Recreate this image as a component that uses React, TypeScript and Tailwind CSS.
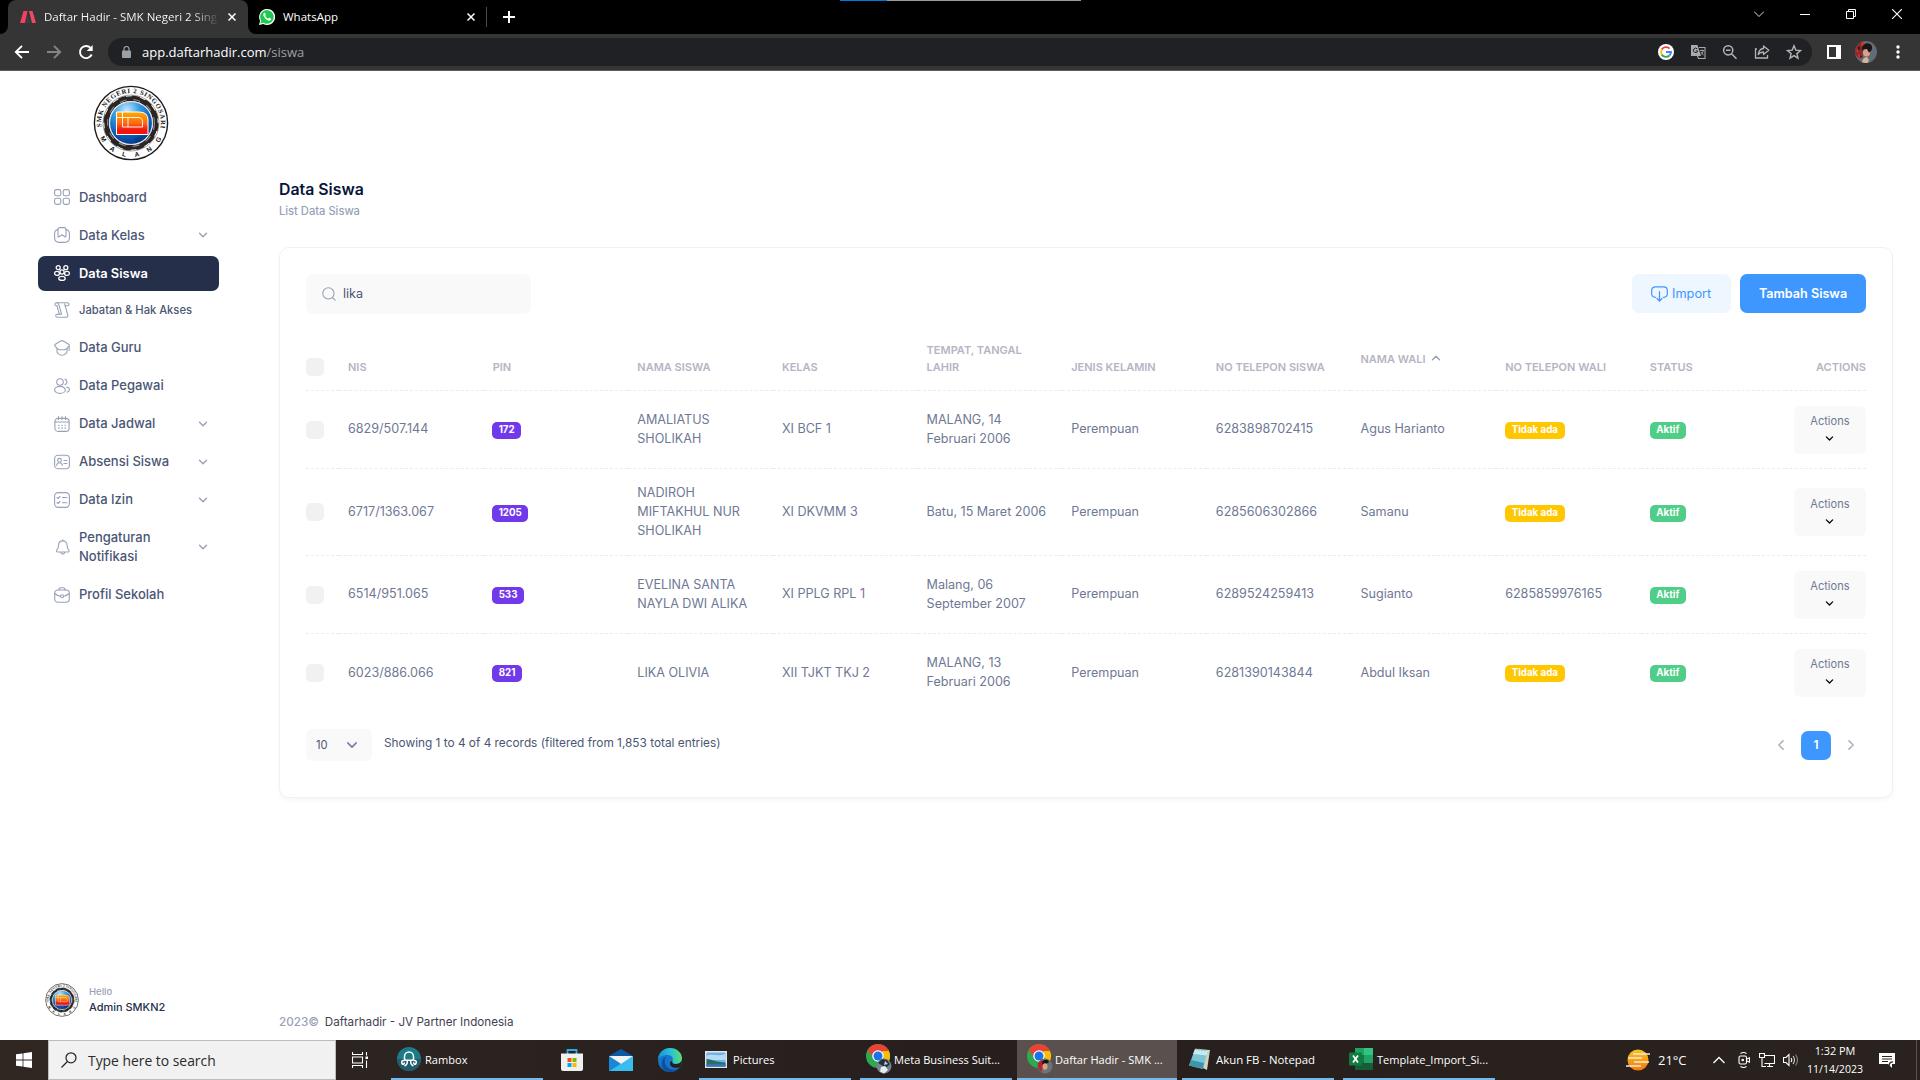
import React from "react";

type IconProps = { className?: string };

const line = {
  fill: "none",
  stroke: "currentColor",
  strokeWidth: 1.1,
  strokeLinecap: "round" as const,
  strokeLinejoin: "round" as const,
};

function SchoolLogo({ className, id }: { className?: string; id: string }) {
  return (
    <svg viewBox="-38 -38 76 76" className={className}>
      <defs>
        <radialGradient id={id + "g"} cx="0.4" cy="0.2" r="0.85">
          <stop offset="0" stopColor="#c9e8fc" />
          <stop offset="0.35" stopColor="#379fe2" />
          <stop offset="0.7" stopColor="#0a5cb8" />
          <stop offset="1" stopColor="#06337e" />
        </radialGradient>
        <linearGradient id={id + "r"} x1="0" y1="0" x2="0" y2="1">
          <stop offset="0" stopColor="#ffab00" />
          <stop offset="0.5" stopColor="#fb6a14" />
          <stop offset="0.8" stopColor="#f3140e" />
        </linearGradient>
        <path id={id + "t"} d="M-29.500 4A29.800 29.800 0 1 1 29.500 4" />
        <path id={id + "b"} d="M-31.800 13A34.400 34.400 0 0 0 31.800 13" />
      </defs>
      <circle r="36.6" fill="#fff" stroke="#1b1b1b" strokeWidth="1.4" />
      <circle r="28" fill="#fff" stroke="#8a8a8a" strokeWidth="0.8" />
      <circle r="24.4" fill="none" stroke="#2a2422" strokeWidth="4.600" />
      <circle r="26.6" fill="none" stroke="#2a2422" strokeWidth="2" strokeDasharray="8 5.93" />
      <circle r="23.400" fill="none" stroke="#8d8682" strokeWidth="1.200" strokeDasharray="7 7" />
      <circle r="21.4" fill={`url(#${id}g)`} stroke="#dfe6ec" strokeWidth="1" />
      <path d="M3 15l8-2 4 1-6 5-5-1z" fill="#063b86" opacity="0.8" />
      <path d="M-14.500-11H8Q17-11 17-3V11.500H-14.500Z" fill={`url(#${id}r)`} stroke="#fff" strokeWidth="1" />
      <path d="M-14.500-5.500H7Q11.500-5.500 11.500-1.500V4H-8.500V-11M-3-5.500V4" fill="none" stroke="#fff" strokeWidth="0.900" />
      <text fontFamily="Liberation Serif" fontWeight="700" fontSize="6.800" fill="#161616">
        <textPath href={`#${id}t`} textLength="103" lengthAdjust="spacing">SMK NEGERI 2 SINGOSARI</textPath>
      </text>
      <text fontFamily="Liberation Sans" fontWeight="700" fontSize="6.600" fill="#161616">
        <textPath href={`#${id}b`} startOffset="2" textLength="76" lengthAdjust="spacing">MALANG</textPath>
      </text>
    </svg>
  );
}

/* ---------- sidebar icons ---------- */
const GridIcon = () => (
  <svg viewBox="0 0 16 16" className="size-4" {...line}>
    <rect x="0.6" y="0.6" width="6.2" height="6.2" rx="1.8" />
    <rect x="9.2" y="0.6" width="6.2" height="6.2" rx="1.8" />
    <rect x="0.6" y="9.200" width="6.2" height="6.2" rx="1.8" />
    <rect x="9.2" y="9.200" width="6.2" height="6.2" rx="1.8" />
  </svg>
);
const ClassIcon = () => (
  <svg viewBox="0 0 16 16" className="size-4" {...line}>
    <path d="M4 2.500C1.800 3 .6 4.300.6 6.500v4.300c0 3 1.700 4.600 4.700 4.600h5.400c3 0 4.700-1.600 4.700-4.600V6.500C15.400 4.300 14.200 3 12 2.500" />
    <path d="M4 9.200V2.400C4 1.300 4.700.6 5.800.6h4.400c1.100 0 1.800.7 1.800 1.800v6.800c0 .6-.6.9-1.100.5L8 7.800l-2.900 1.900c-.5.4-1.100.1-1.100-.5z" />
  </svg>
);
const StudentsIcon = () => (
  <svg viewBox="0 0 16 16" className="size-4" {...line} strokeWidth={1.3}>
    <circle cx="4.200" cy="2.700" r="2" />
    <circle cx="11.800" cy="2.700" r="2" />
    <circle cx="8" cy="7" r="2.100" />
    <ellipse cx="3" cy="8.400" rx="2.400" ry="2" />
    <ellipse cx="13" cy="8.400" rx="2.400" ry="2" />
    <ellipse cx="8" cy="13.400" rx="3.200" ry="2" />
  </svg>
);
const ScrollIcon = () => (
  <svg viewBox="0 0 16 16" className="size-4" {...line}>
    <path d="M3 .7h10.200c1.200 0 1.900.6 1.900 1.600s-.7 1.500-1.600 1.500h-2.300l2.500 9c.4 1.500-.3 2.500-1.500 2.500H3.600c-1.200 0-1.900-.7-1.900-1.600 0-1 .7-1.500 1.600-1.500h2L3 3.800" />
    <path d="M3 3.800H2.400C1.300 3.800.8 3.200.8 2.300S1.600.7 2.700.7 4.500 1.400 4.900 2.800l2.700 9.400H3.500M11.200 3.800l-.5-2" />
  </svg>
);
const GraduateIcon = () => (
  <svg viewBox="0 0 16 16" className="size-4" {...line}>
    <path d="M6.600 1 1.400 4.200C.6 4.700.5 5.500 1 6.200l2.300 2.500c.8.900 1.500 1.100 2.700 1.100h4c1.200 0 1.900-.2 2.700-1.100L15 6.200c.5-.7.400-1.500-.4-2L9.400 1C8.400.4 7.600.4 6.600 1z" />
    <path d="M3 8.800v2.600c0 .9.200 1.300.9 1.900C5.100 14.500 6.300 15.300 8 15.300s2.900-.8 4.100-2c.7-.6.9-1 .9-1.900V8.800M15.100 6.500v4" />
  </svg>
);
const StaffIcon = () => (
  <svg viewBox="0 0 16 16" className="size-4" {...line}>
    <circle cx="6" cy="4" r="3.300" />
    <ellipse cx="6" cy="11.900" rx="5.400" ry="3.500" />
    <path d="M11 1.400a2.700 2.700 0 0 1 0 5.200M12.600 9c1.700.3 2.800 1.300 2.800 2.600s-.9 2.200-2.400 2.600" />
  </svg>
);
const CalendarIcon = () => (
  <svg viewBox="0 0 16 16" className="size-4" {...line}>
    <rect x="0.900" y="2.400" width="14.200" height="13" rx="3.200" />
    <path d="M1 6h14M4.500.6v3M8 .6v3M11.500.6v3" />
    <path d="M4.800 9.300h.3M7.900 9.300h.3M11 9.300h.3M4.800 12h.3M7.900 12h.3M11 12h.3" strokeWidth="1.3" />
  </svg>
);
const IdIcon = () => (
  <svg viewBox="0 0 16 16" className="size-4" {...line}>
    <rect x="0.600" y="1.300" width="14.800" height="13.400" rx="3.400" />
    <circle cx="5.500" cy="6.300" r="1.900" />
    <path d="M2.600 11.300c.3-1.700 1.400-2.600 2.900-2.600s2.600.9 2.900 2.600M10 6.500h3M10 9.500h3" />
  </svg>
);
const ListIcon = () => (
  <svg viewBox="0 0 16 16" className="size-4" {...line}>
    <rect x="0.600" y="0.600" width="14.800" height="14.800" rx="3.600" />
    <path d="M3 5.500l1.100 1 1.900-2M3 10.500l1.100 1 1.900-2M8.300 5.500h4.700M8.300 10.700h4.700" />
  </svg>
);
const BellIcon = () => (
  <svg viewBox="0 0 16 16" className="size-4" {...line}>
    <path d="M8.800.6v1.200M8.800 1.900c-2.600 0-4.200 1.700-4.200 4.200 0 2.400-.6 3.600-1.800 5-.7.900-.3 1.900.8 1.900h10.400c1.100 0 1.500-1 .8-1.900-1.200-1.400-1.800-2.600-1.800-5 0-2.500-1.600-4.200-4.200-4.200zM6.900 13.400c.2 1.100.9 1.700 1.900 1.700s1.700-.6 1.900-1.700" />
  </svg>
);
const BriefcaseIcon = () => (
  <svg viewBox="0 0 16 16" className="size-4" {...line}>
    <rect x="0.700" y="3" width="14.600" height="12.300" rx="3.200" />
    <path d="M5 3C5 1.400 5.800.7 7 .7h2c1.200 0 2 .7 2 2.300M.9 6.500c1.700 1.800 3.500 2.500 5.600 2.700M15.100 6.500c-1.700 1.800-3.500 2.500-5.600 2.700" />
    <circle cx="8" cy="9.200" r="1.500" />
  </svg>
);

function Chevron({ className, dir = "down" }: IconProps & { dir?: "down" | "up" | "left" | "right" }) {
  const d = {
    down: "M1.500 3.200 5 6.700 8.500 3.200",
    up: "M1.500 6.800 5 3.300 8.500 6.800",
    left: "M6.700 1.500 3.200 5 6.700 8.500",
    right: "M3.300 1.500 6.800 5 3.300 8.500",
  }[dir];
  return (
    <svg viewBox="0 0 10 10" className={className} {...line} strokeWidth={1.4}>
      <path d={d} />
    </svg>
  );
}

/* ---------- browser ---------- */
const Close = () => (
  <svg viewBox="0 0 8 8" className="size-2 shrink-0" fill="none" stroke="#fff" strokeWidth="1.5">
    <path d="M.5.5l7 7M7.500.5l-7 7" />
  </svg>
);

function TabStrip() {
  return (
    <div className="relative flex h-[34px] bg-black font-['Open_Sans'] text-[11.5px] text-white">
      <div className="absolute top-0 left-[840px] h-px w-[241px] bg-[#9b9b9b]">
        <div className="h-px w-[47px] bg-[#0078d7]" />
      </div>
      <svg viewBox="0 0 8 8" className="size-2 self-end" fill="#353535">
        <path d="M8 0v8H0a8 8 0 0 0 8-8z" />
      </svg>
      <div className="flex w-[240px] items-center rounded-t-lg bg-[#353535] pr-3 pb-[1px] pl-3">
        <svg viewBox="0 0 16 12" className="h-3 w-4 shrink-0">
          <path d="M3.500 0h4L5 12H0z" fill="#f43f5e" />
          <path d="M9 0h3.500L16 12h-4z" fill="#ee4a62" />
          <path d="M7.800 4l1.600 8h-3z" fill="#33415c" />
        </svg>
        <div className="ml-2 flex-1">
          <span className="bg-gradient-to-r from-white from-85% to-white/10 bg-clip-text leading-[18px] whitespace-nowrap text-transparent">
            Daftar Hadir - SMK Negeri 2 Sing
          </span>
        </div>
        <Close />
      </div>
      <svg viewBox="0 0 8 8" className="size-2 self-end" fill="#353535">
        <path d="M0 0v8h8a8 8 0 0 1-8-8z" />
      </svg>
      <div className="flex w-[230px] items-center pb-[1px] pl-[3px]">
        <svg viewBox="0 0 16 16" className="size-4 shrink-0">
          <path d="M0 16l1.100-4.200A8 8 0 1 1 4.300 15z" fill="#fff" />
          <path d="M1.400 14.600l.8-3A6.800 6.800 0 1 1 4.500 13.800z" fill="#1fc94f" />
          <path d="M5.200 4c-.9.500-1.200 1.500-.7 2.700 1 2.400 2.500 3.800 4.900 4.800 1.300.5 2.400.1 2.700-.9.200-.7.100-.9-.4-1.200l-1.300-.6c-.6-.2-.7.900-1.300.9C8 9.300 6.600 8 6.200 6.800c0-.4.800-.7.600-1.200L6.200 4.200C6 3.800 5.600 3.800 5.200 4z" fill="#fff" />
        </svg>
        <div className="ml-2 flex-1 leading-[18px]">WhatsApp</div>
        <div className="mr-[11px]">
          <Close />
        </div>
      </div>
      <div className="mt-[7px] h-5 w-px bg-[#4b4b4b]" />
      <svg viewBox="0 0 12 12" className="mt-[11px] ml-4 size-3" fill="none" stroke="#fff" strokeWidth="2">
        <path d="M6 0v12M0 6h12" />
      </svg>
      <div className="mt-[9px] ml-auto flex h-[10px] items-center gap-[36px] pr-[18px]">
        <svg viewBox="0 0 10 10" className="size-[10px]" fill="none" stroke="#ddd" strokeWidth="1">
          <path d="M0 2.500l5 5 5-5" />
        </svg>
        <svg viewBox="0 0 10 10" className="size-[10px]" fill="none" stroke="#fff" strokeWidth="1">
          <path d="M0 5.500h10" />
        </svg>
        <svg viewBox="0 0 10 10" className="size-[10px]" fill="none" stroke="#fff" strokeWidth="1">
          <path d="M.5 2.500h7v7h-7zM2.500 2.500v-2h7v7h-2" />
        </svg>
        <svg viewBox="0 0 10 10" className="size-[10px]" fill="none" stroke="#fff" strokeWidth="1.100">
          <path d="M0 0l10 10M10 0L0 10" />
        </svg>
      </div>
    </div>
  );
}

function AvatarPhoto({ className }: IconProps) {
  return (
    <svg viewBox="0 0 22 22" className={className}>
      <clipPath id="avatar-round">
        <circle cx="11" cy="11" r="11" />
      </clipPath>
      <g clipPath="url(#avatar-round)">
        <rect width="22" height="22" fill="#626c76" />
        <path d="M0 6l6-6 3 1-2 7 1 6-3 4-5-4z" fill="#8f2a2c" />
        <path d="M7 0l2 1-1 4-2-1zM1 9l3-1-1 4zM3 13l4 2-2 4z" fill="#e0342f" />
        <path d="M3 5l3 2-3 3zM5 14l3 2-3 1z" fill="#2b2224" />
        <ellipse cx="11.500" cy="11" rx="3.600" ry="4.500" fill="#dca183" />
        <path d="M7 8c0-4 4-7 8-5 2 1 3 4 1 7-1 1-2 2-2.500 1L12 8 8.500 8.500 8 11z" fill="#191517" />
        <path d="M7 22c0-3 2-6 5-6l2 3-1 3z" fill="#d8b29b" />
      </g>
    </svg>
  );
}

function Toolbar() {
  return (
    <div className="flex h-[37px] items-center border-b border-[#5a5a5a] bg-[#353535] font-['Open_Sans'] text-[13px]">
      <div className="flex w-[108px] items-center gap-4 pl-[14px]">
        <svg viewBox="0 0 16 16" className="size-4" fill="none" stroke="#fff" strokeWidth="1.900">
          <path d="M15 8H2.500M8 1.800L1.800 8 8 14.200" />
        </svg>
        <svg viewBox="0 0 16 16" className="size-4" fill="none" stroke="#858585" strokeWidth="1.900">
          <path d="M1 8h12.500M8 1.800L14.200 8 8 14.200" />
        </svg>
        <svg viewBox="0 0 16 16" className="size-4" fill="none" stroke="#fff" strokeWidth="1.900">
          <path d="M13.700 10.500A6.100 6.100 0 1 1 12.600 3.900" />
          <path d="M14.700 1v6H8.700z" fill="#fff" stroke="none" />
        </svg>
      </div>
      <div className="flex h-7 w-[1704px] items-center rounded-full bg-[#202124] pr-[10px] pl-[14px]">
        <svg viewBox="0 0 9 12" className="-mt-px h-3 w-[9px]">
          <rect y="4.500" width="9" height="7.500" rx="1" fill="#9aa0a6" />
          <path d="M2 5V3a2.500 2.500 0 0 1 5 0v2" fill="none" stroke="#9aa0a6" strokeWidth="1.200" />
        </svg>
        <div className="ml-[11px] leading-[18px] text-white">
          app.daftarhadir.com<span className="text-[#9aa0a6]">/siswa</span>
        </div>
        <div className="ml-auto flex items-center gap-4">
          <svg viewBox="0 0 16 16" className="size-4">
            <circle cx="8" cy="8" r="8" fill="#fff" />
            <g fill="none" strokeWidth="1.900">
              <path d="M11.600 4.600A5 5 0 0 0 3.700 5.600" stroke="#ea4335" />
              <path d="M3.700 5.600a5 5 0 0 0 0 4.800" stroke="#fbbc05" />
              <path d="M3.700 10.400a5 5 0 0 0 7.800 1.100" stroke="#34a853" />
              <path d="M11.500 11.500A5 5 0 0 0 13 8H8" stroke="#4285f4" />
            </g>
          </svg>
          <svg viewBox="0 0 16 16" className="size-4">
            <path d="M1 1h6.500L11 12H1z" fill="#a9a9a9" />
            <path d="M9 3.500h6v11H8.500l-1-2.500" fill="none" stroke="#a9a9a9" strokeWidth="1.100" />
            <path d="M7.300 5a2.200 2.200 0 1 0 .4 2H5.800" fill="none" stroke="#202124" strokeWidth="1" />
            <path d="M10 6.500h4M12 5.500v1M13.300 6.600c-.4 2-1.400 3.300-2.300 4M11 8c.7 1.500 1.600 2.300 2.700 3" fill="none" stroke="#a9a9a9" strokeWidth="0.900" />
          </svg>
          <svg viewBox="0 0 16 16" className="size-4" fill="none" stroke="#b4b4b4" strokeWidth="1.500">
            <circle cx="6.200" cy="6.300" r="4.600" />
            <path d="M9.500 9.700l5 5M4 6.300h4.500" />
          </svg>
          <svg viewBox="0 0 16 16" className="size-4" fill="none" stroke="#b4b4b4" strokeWidth="1.300">
            <path d="M3 5H1.500v9h12v-3" />
            <path d="M9.500 2l5.300 4.300-5.300 4.200V8C7 8 5.500 8.800 4.200 10.500 4.600 7 6.300 4.800 9.500 4.500z" strokeLinejoin="round" />
          </svg>
          <svg viewBox="0 0 16 16" className="size-4" fill="none" stroke="#b4b4b4" strokeWidth="1.400">
            <path d="M8 1.800l1.800 4.300 4.700.4-3.600 3.100 1.100 4.600L8 11.700l-4 2.500 1.100-4.600L1.500 6.500l4.700-.4z" />
          </svg>
        </div>
      </div>
      <svg viewBox="0 0 14 14" className="ml-[15px] size-[14px]">
        <path d="M0 0h14v14H0z" fill="#fff" />
        <path d="M2 2h7v10H2z" fill="#353535" />
      </svg>
      <AvatarPhoto className="ml-[14px] size-[22px]" />
      <svg viewBox="0 0 4 16" className="ml-[19px] h-4 w-1" fill="#fff">
        <circle cx="2" cy="3" r="1.700" />
        <circle cx="2" cy="8" r="1.700" />
        <circle cx="2" cy="13" r="1.700" />
      </svg>
    </div>
  );
}

/* ---------- sidebar ---------- */
function NavItem({
  icon,
  label,
  arrow,
  active,
  className = "h-[38px] text-[12.990px]",
}: {
  icon: React.ReactNode;
  label: React.ReactNode;
  arrow?: boolean;
  active?: boolean;
  className?: string;
}) {
  return (
    <div className={`flex shrink-0 items-center ${className}`}>
      <div
        className={
          active
            ? "flex h-[35px] flex-1 items-center rounded-[7px] bg-[#252f4a] pr-3 pl-4 text-[12.850px] font-semibold text-white"
            : "flex flex-1 items-center pr-3 pl-4 font-medium text-[#4b5675]"
        }
      >
        <span className={active ? "text-white" : "text-[#99a1b7]"}>{icon}</span>
        <span className="ml-[9px] flex-1 leading-[19px]">{label}</span>
        {arrow && <Chevron className="mr-[-1px] size-[10px] text-[#99a1b7]" />}
      </div>
    </div>
  );
}

function Sidebar() {
  return (
    <aside className="flex w-[279px] flex-col">
      <div className="flex h-[107px] justify-center pt-[14px] pr-[17px]">
        <SchoolLogo id="main" className="size-[76px]" />
      </div>
      <nav className="ml-[38px] flex w-[181px] flex-col">
        <NavItem icon={<GridIcon />} label="Dashboard" />
        <NavItem icon={<ClassIcon />} label="Data Kelas" arrow />
        <NavItem icon={<StudentsIcon />} label="Data Siswa" active />
        <NavItem icon={<ScrollIcon />} label="Jabatan & Hak Akses" className="h-[36.500px] text-[11.180px]" />
        <NavItem icon={<GraduateIcon />} label="Data Guru" />
        <NavItem icon={<StaffIcon />} label="Data Pegawai" />
        <NavItem icon={<CalendarIcon />} label="Data Jadwal" arrow />
        <NavItem icon={<IdIcon />} label="Absensi Siswa" arrow />
        <NavItem icon={<ListIcon />} label="Data Izin" arrow />
        <NavItem
          icon={<BellIcon />}
          label={
            <>
              Pengaturan
              <br />
              Notifikasi
            </>
          }
          arrow
          className="h-[57px] text-[12.990px]"
        />
        <NavItem icon={<BriefcaseIcon />} label="Profil Sekolah" />
      </nav>
      <div className="mt-auto mb-[23px] ml-[45px] flex items-center">
        <SchoolLogo id="user" className="size-[34px]" />
        <div className="-mt-[2px] ml-[10px]">
          <div className="text-[9.510px] leading-[15px] font-medium text-[#99a1b7]">Hello</div>
          <div className="text-[10.980px] leading-4 font-medium text-[#252f4a]">Admin SMKN2</div>
        </div>
      </div>
    </aside>
  );
}

/* ---------- table ---------- */
type Row = {
  nis: string;
  pin: string;
  name: string[];
  kelas: string;
  ttl: string[];
  phone: string;
  wali: string;
  waliPhone?: string;
  height: string;
};

const rows: Row[] = [
  { nis: "6829/507.144", pin: "172", name: ["AMALIATUS", "SHOLIKAH"], kelas: "XI BCF 1", ttl: ["MALANG, 14", "Februari 2006"], phone: "6283898702415", wali: "Agus Harianto", height: "h-[78px]" },
  { nis: "6717/1363.067", pin: "1205", name: ["NADIROH", "MIFTAKHUL NUR", "SHOLIKAH"], kelas: "XI DKVMM 3", ttl: ["Batu, 15 Maret 2006"], phone: "6285606302866", wali: "Samanu", height: "h-[87px]" },
  { nis: "6514/951.065", pin: "533", name: ["EVELINA SANTA", "NAYLA DWI ALIKA"], kelas: "XI PPLG RPL 1", ttl: ["Malang, 06", "September 2007"], phone: "6289524259413", wali: "Sugianto", waliPhone: "6285859976165", height: "h-[78px]" },
  { nis: "6023/886.066", pin: "821", name: ["LIKA OLIVIA"], kelas: "XII TJKT TKJ 2", ttl: ["MALANG, 13", "Februari 2006"], phone: "6281390143844", wali: "Abdul Iksan", height: "h-[78px]" },
];

const headers = ["NIS", "PIN", "NAMA SISWA", "KELAS", "TEMPAT, TANGAL LAHIR", "JENIS KELAMIN", "NO TELEPON SISWA", "NAMA WALI", "NO TELEPON WALI", "STATUS"];

const gridCols = "grid grid-cols-[33px_repeat(10,144.650px)_80.500px]";

function Lines({ items }: { items: string[] }) {
  return (
    <div className="-mt-[2px]">
      {items.map((t) => (
        <div key={t} className="whitespace-nowrap">
          {t}
        </div>
      ))}
    </div>
  );
}

const Checkbox = () => <div className="size-[18px] rounded-[5px] bg-[#f1f1f2]" />;

function Badge({ className, children }: { className: string; children: React.ReactNode }) {
  return (
    <span className={`mt-[2px] flex h-[17px] items-center rounded-[5px] px-[6.500px] pb-[2px] text-[9.750px] font-bold text-white ${className}`}>
      {children}
    </span>
  );
}

function Table() {
  return (
    <div className="mt-[21px] w-[1560px]">
      <div className={`${gridCols} h-[56px] text-[11px] leading-[17px] font-semibold text-[#b5b5c3]`}>
        <div className="flex items-end border-b border-dashed border-[#ececef] pb-[14px]">
          <Checkbox />
        </div>
        {headers.map((h) => (
          <div key={h} className={`flex items-end border-b border-dashed border-[#ececef] pl-[9px] ${h === "NAMA WALI" ? "pb-[22px]" : "pb-[14px]"}`}>
            <span className={h.startsWith("TEMPAT") ? "w-[100px]" : "whitespace-nowrap"}>{h}</span>
            {h === "NAMA WALI" && <Chevron dir="up" className="mb-[5px] ml-[5px] size-[10px] text-[#99a1b7]" />}
          </div>
        ))}
        <div className="flex items-end justify-end border-b border-dashed border-[#ececef] pb-[14px]">ACTIONS</div>
      </div>
      {rows.map((r, i) => {
        const border = i < 3 ? "border-b border-dashed border-[#ececef]" : "";
        const cell = `flex items-center pl-[9px] ${border}`;
        const badgeCell = `${cell} ${i === 3 ? "pb-px" : ""}`;
        return (
          <div key={r.nis} className={`${gridCols} ${r.height} text-[12.580px] leading-[19px] font-normal text-[#6f7894]`}>
            <div className={`flex items-center ${border} ${i % 2 ? "" : "pt-px"}`}>
              <Checkbox />
            </div>
            <div className={cell}><Lines items={[r.nis]} /></div>
            <div className={badgeCell}><Badge className="-ml-[0.500px] bg-[#7239ea]">{r.pin}</Badge></div>
            <div className={cell}><Lines items={r.name} /></div>
            <div className={cell}><Lines items={[r.kelas]} /></div>
            <div className={cell}><Lines items={r.ttl} /></div>
            <div className={cell}><Lines items={["Perempuan"]} /></div>
            <div className={cell}><Lines items={[r.phone]} /></div>
            <div className={cell}><Lines items={[r.wali]} /></div>
            <div className={r.waliPhone ? cell : badgeCell}>
              {r.waliPhone ? <Lines items={[r.waliPhone]} /> : <Badge className="bg-[#ffc700]">Tidak ada</Badge>}
            </div>
            <div className={badgeCell}><Badge className="bg-[#50cd89]">Aktif</Badge></div>
            <div className={`flex items-center justify-end ${border}`}>
              <div className={`flex h-12 w-[72px] flex-col items-center rounded-[6px] bg-[#f9f9f9] text-[11.060px] leading-[18px] ${i === 1 ? "pt-[7px]" : "pt-[6px]"}`}>
                Actions
                <Chevron className="mt-[4px] size-[9px] text-black" />
              </div>
            </div>
          </div>
        );
      })}
    </div>
  );
}

function Main() {
  return (
    <main className="flex flex-1 flex-col">
      <h1 className="mt-[107px] text-[15.840px] leading-6 font-semibold text-[#071437]">Data Siswa</h1>
      <p className="pt-px text-[11.150px] leading-[17px] font-medium text-[#99a1b7]">List Data Siswa</p>
      <section className="mt-[27px] h-[551px] w-[1614px] rounded-[10px] border border-[#f1f1f2] bg-white px-[26px] pt-[26px] shadow-[0_3px_4px_rgba(0,0,0,0.03)]">
        <div className="flex justify-between">
          <div className="flex h-10 w-[225px] items-center rounded-[7px] bg-[#f9f9f9] pl-4 text-[12.600px] text-[#4b5675]">
            <svg viewBox="0 0 14 14" className="-mt-px size-[14px] text-[#99a1b7]" {...line}>
              <circle cx="6.400" cy="6.400" r="5.600" />
              <path d="M10.700 11l2.500 2.200" />
            </svg>
            <span className="ml-[7px]">lika</span>
          </div>
          <div className="flex gap-[9px]">
            <div className="flex h-[39px] w-[99px] items-center rounded-[7px] bg-[#eef6ff] pt-px pl-[19px] text-[12.760px] text-[#3e97ff]">
              <svg viewBox="0 0 17 16" className="h-4 w-[17px]" {...line} strokeWidth={1.200}>
                <path d="M4.500 11.300C2 11.300.7 10 .7 7.800V4.500C.7 2.200 2.100.800 4.400.800h8.200c2.300 0 3.700 1.400 3.700 3.700v3.300c0 2.200-1.300 3.500-3.800 3.500M8.500 5.500v9M6 12.500l2.500 2.700 2.500-2.700" />
              </svg>
              <span className="ml-[4px]">Import</span>
            </div>
            <div className="flex h-[39px] w-[126px] items-center justify-center rounded-[7px] bg-[#3e97ff] pt-px text-[12.600px] font-semibold text-white">
              Tambah Siswa
            </div>
          </div>
        </div>
        <Table />
        <div className="mt-[17px] flex h-8 items-center justify-between">
          <div className="flex items-center">
            <div className="flex h-8 w-[66px] items-center rounded-[6px] bg-[#f9f9f9] pr-[14px] pl-[10px] text-[11.200px] text-[#4b5675]">
              <span className="flex-1">10</span>
              <Chevron className="size-3 text-[#78829d]" />
            </div>
            <span className="-mt-[2px] ml-3 text-[11.830px] text-[#4b5675]">
              Showing 1 to 4 of 4 records (filtered from 1,853 total entries)
            </span>
          </div>
          <div className="flex items-center text-[#b5b5c3]">
            <Chevron dir="left" className="size-3" />
            <div className="mr-[14px] ml-[14px] flex h-[29px] w-[30px] items-center justify-center rounded-[7px] bg-[#3e97ff] pb-px text-[12px] font-semibold text-white">
              1
            </div>
            <Chevron dir="right" className="mr-[9px] size-3" />
          </div>
        </div>
      </section>
      <footer className="mt-auto mb-[9px] flex gap-[6px] text-[11.660px] leading-[18px]">
        <span className="font-medium text-[#99a1b7]">2023©</span>
        <span className="text-[#3f4254]">Daftarhadir - JV Partner Indonesia</span>
      </footer>
    </main>
  );
}

/* ---------- taskbar ---------- */
const ChromeIcon = ({ photo }: { photo: boolean }) => (
  <svg viewBox="0 0 26 32" className="mt-[2px] h-8 w-[26px]">
    <circle cx="12" cy="12" r="12" fill="#2da94f" />
    <path d="M22.400 6A12 12 0 0 1 12 24l6-9-2-9z" fill="#fbbc05" />
    <path d="M12 0A12 12 0 0 0 1.600 6L7 13l5-6h10.900A12 12 0 0 0 12 0z" fill="#ea4335" />
    <circle cx="12" cy="12" r="5.800" fill="#fff" />
    <circle cx="12" cy="12" r="4.500" fill="#1a73e8" />
    <circle cx="18" cy="22" r="7.500" fill={photo ? "#6b7278" : "#77838f"} />
    {photo ? (
      <>
        <path d="M11 19l5-4 1 6-3 7c-3-3-3.500-6-3-9z" fill="#b3262b" />
        <path d="M15 19c1-4 6-4 7-1l-3 2-3 2z" fill="#171314" />
        <ellipse cx="18" cy="22.500" rx="2.500" ry="3.300" fill="#dca183" />
      </>
    ) : (
      <>
        <path d="M12 19l4-4 5 1 3 4-3 3-4-1z" fill="#27303a" />
        <path d="M15 23l4-1 3 4-4 3.500-4-2z" fill="#e8edf2" />
        <path d="M19 17l3 3-4 1z" fill="#c3ced8" />
      </>
    )}
  </svg>
);

function Task({
  icon,
  label,
  active,
  className = "",
}: {
  icon: React.ReactNode;
  label: string;
  active?: boolean;
  className?: string;
}) {
  return (
    <div
      className={`flex h-10 items-center border-b-2 border-[#76b9ed] ${active ? "w-[160px] bg-[#5a514e] pl-[10px]" : "w-[152px] pl-[6px]"} ${className}`}
    >
      {icon}
      <span className="pt-[2px] whitespace-nowrap">{label}</span>
    </div>
  );
}

function Taskbar() {
  return (
    <div className="flex h-10 items-center bg-linear-to-r from-[#302723] from-0% via-[#261f1d] via-50% to-[#29221e] font-['Open_Sans'] text-[11.080px] text-white">
      <div className="flex w-12 justify-center">
        <svg viewBox="0 0 16 16" className="size-4" fill="#fff">
          <path d="M0 2.300l6.600-.9v6.200H0zM7.400 1.300L16 0v7.600H7.400zM0 8.400h6.600v6.200L0 13.700zM7.400 8.400H16V16l-8.600-1.300z" />
        </svg>
      </div>
      <div className="flex h-10 w-[288px] items-center border border-[#bdbdbd] bg-[#f1f1f1] pl-3 text-[13.880px] text-[#2b2b2b]">
        <svg viewBox="0 0 16 16" className="size-4" fill="none" stroke="#222" strokeWidth="1.200">
          <circle cx="10" cy="5.800" r="5" />
          <path d="M6.400 9.500L.5 15.500" />
        </svg>
        <span className="ml-[11px] pt-[2px]">Type here to search</span>
      </div>
      <svg viewBox="0 0 16 16" className="ml-4 size-4" fill="none" stroke="#fff" strokeWidth="1.100">
        <path d="M.5 0v2.500h10V0M.5 16v-2.500h10V16M.5 5h10v6H.5zM14.500 0v3.500M14.500 8.500V16" />
        <path d="M13.500 4.500h2.500v2.500h-2.500z" fill="#fff" stroke="none" />
      </svg>
      <Task
        className="ml-[23px] gap-1"
        label="Rambox"
        icon={
          <svg viewBox="0 0 24 24" className="size-6">
            <circle cx="12" cy="12" r="12" fill="#1c7b87" />
            <path d="M0 12a12 12 0 0 0 24 0z" fill="#235b6c" />
            <g fill="none" stroke="#fff" strokeWidth="1.500" strokeLinecap="round">
              <path d="M7.500 12V9.500a4.500 4.500 0 0 1 9 0V12q0 1.200-1.500 1.200H9q-1.500 0-1.500-1.200z" />
              <path d="M7 13.500c-2-.5-2.800 1-2 3 .8 1.300 2 1 2.300-.5M17 13.500c2-.5 2.800 1 2 3-.8 1.300-2 1-2.300-.5M10.300 13.500c.2 3-.6 4.500-2.300 5.200M13.700 13.500c-.2 3 .6 4.500 2.300 5.200" />
            </g>
          </svg>
        }
      />
      <svg viewBox="0 0 24 24" className="ml-[17px] size-6">
        <path d="M7.500 7V2h9v5" fill="none" stroke="#2fa8e8" strokeWidth="1.800" />
        <path d="M1 5.500h22V21a2 2 0 0 1-2 2H3a2 2 0 0 1-2-2z" fill="#f0f0f0" />
        <path d="M7.500 10H11.500v4H7.500z" fill="#f25022" />
        <path d="M12.500 10h4v4h-4z" fill="#7fba00" />
        <path d="M7.500 15h4v4h-4z" fill="#00a4ef" />
        <path d="M12.500 15h4v4h-4z" fill="#ffb900" />
      </svg>
      <svg viewBox="0 0 24 24" className="ml-[25px] size-6">
        <path d="M0 8L12 1l12 7v3H0z" fill="#0c59a4" />
        <path d="M0 8l12 8L0 23z" fill="#1a86d9" />
        <path d="M24 8v15H0z" fill="#38bdf0" />
        <path d="M0 8h24L12 16z" fill="#f0f4f8" />
      </svg>
      <svg viewBox="0 0 24 24" className="ml-[25px] size-6">
        <defs>
          <linearGradient id="edge" x1="0" y1="0.300" x2="1" y2="0.200">
            <stop offset="0" stopColor="#1b8fe0" />
            <stop offset="0.550" stopColor="#2bc3d2" />
            <stop offset="1" stopColor="#66dd5c" />
          </linearGradient>
        </defs>
        <circle cx="12" cy="12" r="12" fill="#1576cc" />
        <path d="M0 11C1 4 6 0 12 0c7 0 12 5 12 10 0 4-3 6-6.500 6-3 0-4-1.500-3-3 1.500-3-1-6-5-6-4 0-8 2-9.500 4z" fill="url(#edge)" />
        <path d="M8.500 9C5 12 6.500 20 14 21.500c3 .5 5.500-.5 7.500-2.200C19.500 22.500 16 24 12.500 24 6 24 1 18 5 11c1-1.500 2.500-2 3.500-2z" fill="#104f9d" />
        <path d="M14.500 13c-1 1.500 0 3 3 3 3.500 0 5.500-1.500 6.200-4 0 3-.7 5.500-2.200 7.300-3 1.200-9 .7-9.500-3.300-.2-1.500.5-3 2.500-3z" fill="#261f1d" />
      </svg>
      <Task
        className="ml-[17px] gap-[6px]"
        label="Pictures"
        icon={
          <svg viewBox="0 0 22 17" className="h-[17px] w-[22px]">
            <rect width="22" height="17" fill="#e6e6e6" />
            <rect x="1.500" y="1.500" width="19" height="14" fill="#6fb3e6" />
            <path d="M1.500 5c5-3 11 1 19-2v6h-19z" fill="#b4dcf5" />
            <path d="M1.500 8c5 0 8 3 19 3.500v4h-19z" fill="#2e6b63" />
            <path d="M1.500 13h19v2.500h-19z" fill="#2f78b7" />
          </svg>
        }
      />
      <Task className="ml-[9px] gap-[2px]" label="Meta Business Suit..." icon={<ChromeIcon photo={false} />} />
      <Task className="ml-[5px] gap-[2px]" active label="Daftar Hadir - SMK ..." icon={<ChromeIcon photo />} />
      <Task
        className="ml-[5px] gap-[4px] text-[11.400px]"
        label="Akun FB - Notepad"
        icon={
          <svg viewBox="0 0 24 24" className="size-6">
            <path d="M8 2l14 1-3 20-4-2z" fill="#d8d2c2" />
            <path d="M7 2l13 1.500L15 22 1 18.500z" fill="#7cc5d6" />
            <path d="M7 2l13 1.500-1.500 5L5 7z" fill="#c4ebf2" />
            <path d="M3 13l13 3-1 6-14-3.500z" fill="#3f95ab" />
            <path d="M8 1v2M11 1.500v2M14 1.800v2M17 2v2" stroke="#8f8f8f" strokeWidth="1" />
          </svg>
        }
      />
      <Task
        className="ml-[9px] gap-[4px]"
        label="Template_Import_Si..."
        icon={
          <svg viewBox="0 0 24 24" className="size-6">
            <path d="M6 1h9v7H6z" fill="#21a366" />
            <path d="M15 1h9v7h-9z" fill="#33c481" />
            <path d="M6 8h18v8H6z" fill="#107c41" />
            <path d="M15 8h9v8h-9z" fill="#21a366" />
            <path d="M6 16h18v7H6z" fill="#185c37" />
            <rect y="5.500" width="13" height="13" rx="1" fill="#107c41" />
            <path d="M4 8.500l5 7M9 8.500l-5 7" stroke="#fff" strokeWidth="1.700" />
          </svg>
        }
      />
      <svg viewBox="0 0 24 22" className="ml-[131px] h-[22px] w-6">
        <defs>
          <linearGradient id="sun" x1="0" y1="0" x2="0" y2="1">
            <stop offset="0" stopColor="#fcc21f" />
            <stop offset="1" stopColor="#f47a10" />
          </linearGradient>
        </defs>
        <circle cx="12" cy="11" r="10.500" fill="url(#sun)" />
        <path d="M7 5h17M2 9h14M8 13h15M0 17h15" stroke="#f4ecd8" strokeWidth="1.500" />
      </svg>
      <span className="ml-2 w-[55px] pt-[2px] text-[12.940px]">21°C</span>
      <svg viewBox="0 0 12 8" className="h-2 w-3" fill="none" stroke="#fff" strokeWidth="1.300">
        <path d="M.5 7L6 1.500 11.500 7" />
      </svg>
      <svg viewBox="0 0 12 18" className="ml-[13px] h-[18px] w-3" fill="none" stroke="#fff" strokeWidth="1.100">
        <path d="M2.500 2.500q3-2 6 0M2.500 15.500q3 2 6 0" />
        <rect x="1" y="5" width="7.500" height="8" rx="1.500" />
        <path d="M9 8l2.500-1.200v4.400L9 10" />
        <circle cx="4.700" cy="9" r="0.800" />
      </svg>
      <svg viewBox="0 0 16 16" className="ml-[9px] size-4" fill="none" stroke="#fff" strokeWidth="1.100">
        <path d="M5.500 3.500h10v8h-10M8 14.500h6M10.500 11.500v3M.5 1.500h5v4h-5zM3 5.500v9h4" />
      </svg>
      <svg viewBox="0 0 16 16" className="ml-2 size-4" fill="none" stroke="#fff" strokeWidth="1.100">
        <path d="M.5 5.500h2.500l3-3v11l-3-3H.5zM8 6q1.500 2 0 4" />
        <path d="M10 4q3 4 0 8" opacity="0.800" />
        <path d="M12.500 2.500q4 5.500 0 11" opacity="0.450" />
      </svg>
      <div className="ml-1 w-[64px] text-center text-[10.900px] leading-[18px]">
        <div>1:32 PM</div>
        <div className="text-[10.550px]">11/14/2023</div>
      </div>
      <svg viewBox="0 0 17 17" className="ml-[12px] size-[17px]">
        <path d="M0 1h16v11h-3v4l-4-4H0z" fill="#fff" />
        <path d="M3 4.500h10M3 7h10M3 9.500h6" stroke="#2b241f" strokeWidth="1" />
        <path d="M14 10a3.500 3.500 0 1 0 2.500 5.500" fill="none" stroke="#2b241f" strokeWidth="1.200" />
      </svg>
      <div className="ml-auto h-10 w-px bg-[#5d5650]" />
      <div className="w-[3px]" />
    </div>
  );
}

export default function App() {
  return (
    <div className="flex h-[1080px] w-[1920px] flex-col overflow-hidden bg-white font-['Inter',sans-serif]">
      <TabStrip />
      <Toolbar />
      <div className="flex flex-1 bg-white">
        <Sidebar />
        <Main />
      </div>
      <Taskbar />
    </div>
  );
}
